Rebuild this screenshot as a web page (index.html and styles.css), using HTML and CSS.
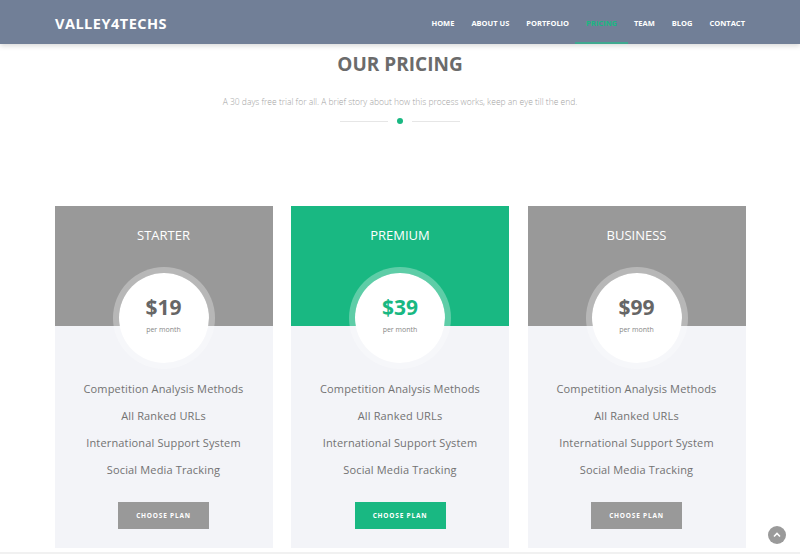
FILE: index.html
```html
<html lang="en">
  <head>
    <meta charset="UTF-8" />
    <meta name="viewport" content="width=device-width, initial-scale=1.0" />
    <title>Valley4Techs - Pricing</title>
    <link rel="stylesheet" href="styles.css">
  </head>
  <body>
    <header class="navbar">
      <div class="logo">VALLEY4TECHS</div>
      <nav class="menu">
        <a href="#">Home</a>
        <a href="#">About us</a>
        <a href="#">Portfolio</a>
        <a href="#" class="active">Pricing</a>
        <a href="#">Team</a>
        <a href="#">Blog</a>
        <a href="#">Contact</a>
      </nav>
    </header>

    <section class="pricing">
      <h1>Our Pricing</h1>
      <p class="lead">A 30 days free trial for all. A brief story about how this process works, keep an eye till the end.</p>
      <div class="divider"><span></span><i></i><span></span></div>

      <div class="plans">
        <div class="plan">
          <div class="plan-head">
            <h2>Starter</h2>
            <div class="price"><strong>$19</strong><small>per month</small></div>
          </div>
          <div class="plan-body">
            <ul>
              <li>Competition Analysis Methods</li>
              <li>All Ranked URLs</li>
              <li>International Support System</li>
              <li>Social Media Tracking</li>
            </ul>
            <button>Choose Plan</button>
          </div>
        </div>

        <div class="plan featured">
          <div class="plan-head">
            <h2>Premium</h2>
            <div class="price"><strong>$39</strong><small>per month</small></div>
          </div>
          <div class="plan-body">
            <ul>
              <li>Competition Analysis Methods</li>
              <li>All Ranked URLs</li>
              <li>International Support System</li>
              <li>Social Media Tracking</li>
            </ul>
            <button>Choose Plan</button>
          </div>
        </div>

        <div class="plan">
          <div class="plan-head">
            <h2>Business</h2>
            <div class="price"><strong>$99</strong><small>per month</small></div>
          </div>
          <div class="plan-body">
            <ul>
              <li>Competition Analysis Methods</li>
              <li>All Ranked URLs</li>
              <li>International Support System</li>
              <li>Social Media Tracking</li>
            </ul>
            <button>Choose Plan</button>
          </div>
        </div>
      </div>
    </section>
    <div class="next-section"></div>

    <a href="#" class="to-top">
      <svg width="8" height="8" viewBox="0 0 8 8"><path d="M1 5.5 L4 2.5 L7 5.5" fill="none" stroke="#fff" stroke-width="1.6"/></svg>
    </a>
  </body>
</html>
```

FILE: styles.css
```css
body {
  margin: 0;
  background: #fff;
  font-family: "Open Sans", sans-serif;
  overflow: hidden;
}

.navbar {
  height: 44px;
  background-color: #717f97;
  box-shadow: 0 2px 5px rgba(0, 0, 0, 0.15);
  display: flex;
  align-items: center;
  justify-content: space-between;
  padding: 0 55px;
  position: relative;
  z-index: 2;
}

.logo {
  color: #fff;
  font-size: 14.5px;
  font-weight: 700;
  letter-spacing: 0.5px;
  padding-top: 3px;
}

.menu {
  display: flex;
  gap: 17px;
  align-self: stretch;
}

.menu a {
  display: flex;
  align-items: center;
  color: #fff;
  font-size: 7.5px;
  font-weight: 700;
  text-transform: uppercase;
  text-decoration: none;
  border-bottom: 2px solid transparent;
  padding: 4px 0 0 0;
}

.menu a.active {
  color: #19b882;
  border-bottom-color: #3fa88f;
  padding: 4px 11px 0 11px;
  margin: 0 -11px;
}

.pricing {
  text-align: center;
  padding-top: 7px;
}

.pricing h1 {
  margin: 0;
  color: #6b6b6b;
  font-size: 19px;
  font-weight: 700;
  text-transform: uppercase;
  line-height: 26px;
}

.lead {
  margin: 19px 0 0 0;
  color: #a3a3a3;
  font-size: 8.5px;
  font-weight: 300;
  line-height: 12px;
}

.divider {
  display: flex;
  align-items: center;
  justify-content: center;
  gap: 9px;
  margin-top: 10px;
  height: 6px;
}

.divider span {
  width: 48px;
  height: 1px;
  background: #e6e6e6;
}

.divider i {
  width: 6px;
  height: 6px;
  border-radius: 50%;
  background: #19b882;
}

.plans {
  display: grid;
  grid-template-columns: repeat(3, 218px);
  gap: 18.5px;
  justify-content: center;
  margin-top: 82px;
}

.plan-head {
  height: 120px;
  background: #999999;
  display: flex;
  flex-direction: column;
  align-items: center;
}

.featured .plan-head {
  background: #19b882;
}

.plan-head h2 {
  margin: 20px 0 0 0;
  color: #fff;
  font-size: 13px;
  font-weight: 400;
  text-transform: uppercase;
  line-height: 18px;
}

.price {
  margin-top: auto;
  margin-bottom: -43px;
  width: 90px;
  height: 90px;
  border: 6px solid rgba(255, 255, 255, 0.3);
  border-radius: 50%;
  background: #fff;
  background-clip: padding-box;
  display: flex;
  flex-direction: column;
  align-items: center;
  justify-content: center;
  position: relative;
  z-index: 1;
}

.price strong {
  color: #666;
  font-size: 21px;
  font-weight: 700;
  line-height: 26px;
  margin-top: -9px;
}

.featured .price strong {
  color: #19b882;
}

.price small {
  color: #888;
  font-size: 7px;
  margin-top: 5px;
}

.plan-body {
  background: #f3f4f8;
  padding: 49px 0 19px 0;
}

.plan-body ul {
  list-style: none;
  margin: 0;
  padding: 0;
}

.plan-body li {
  color: #727272;
  font-size: 11px;
  font-weight: 500;
  letter-spacing: 0.15px;
  line-height: 27px;
}

.plan-body button {
  margin-top: 19px;
  width: 91px;
  height: 27px;
  border: none;
  background: #999;
  color: #fff;
  font-family: "Open Sans", sans-serif;
  font-size: 6.5px;
  font-weight: 700;
  letter-spacing: 0.8px;
  text-transform: uppercase;
}

.featured .plan-body button {
  background: #19b882;
}

.next-section {
  margin-top: 4px;
  height: 40px;
  background: #f1f1f1;
}

.to-top {
  position: fixed;
  left: 768px;
  top: 526px;
  width: 18px;
  height: 18px;
  border-radius: 50%;
  background: #9a9a9a;
  display: flex;
  align-items: center;
  justify-content: center;
}
```
